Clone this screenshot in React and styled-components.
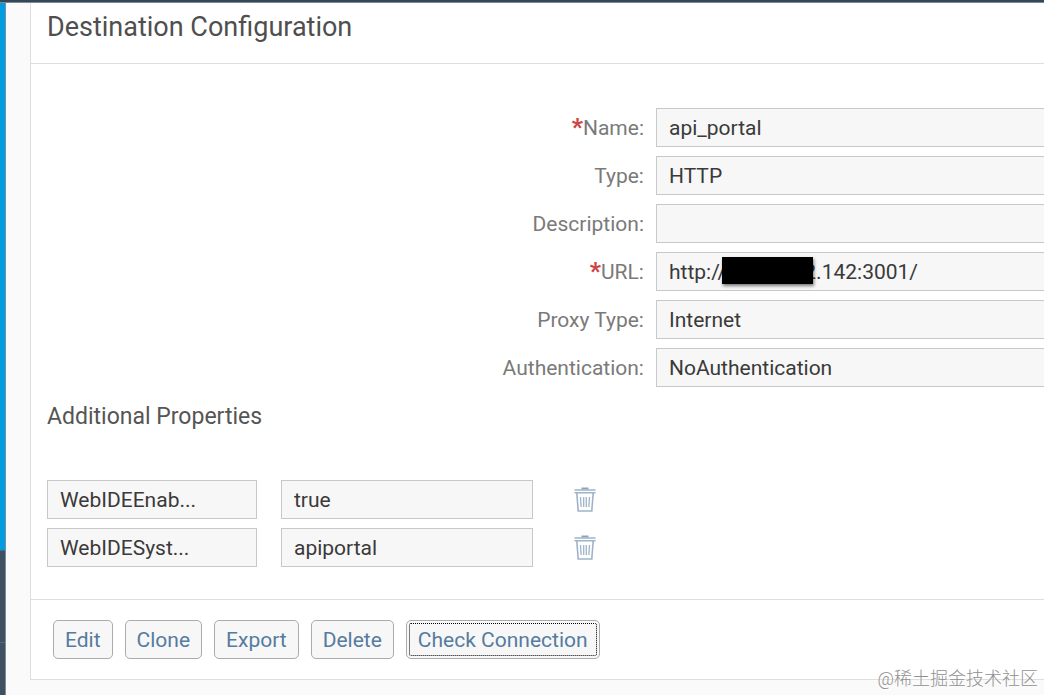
import React from 'react'
import styled, { createGlobalStyle } from 'styled-components'

const GlobalStyle = createGlobalStyle`
  * {
    box-sizing: border-box;
  }

  body {
    margin: 0;
    background-color: #fafafa;
    font-family: Roboto, "Noto Sans CJK SC", sans-serif;
    font-size: 21px;
    color: #333333;
  }
`

const Container = styled.div`
  position: relative;
  display: flex;
  flex-direction: column;
  min-height: 100vh;
  overflow: hidden;
`

const TopBar = styled.div`
  height: 3px;
  background-color: #354656;
  border-bottom: 1px solid #7b8a98;
`

const Wrapper = styled.div`
  display: flex;
  flex: 1;
`

const Sidebar = styled.div`
  display: flex;
  flex-direction: column;
  width: 6px;
  border-right: 1px solid #7790a5;
  background-color: #3f5161;
`

const SidebarActive = styled.div`
  flex: 1;
  background-color: #009de0;
`

const SidebarItem = styled.div`
  height: ${props => props.$height};
  border-top: 1px solid #4f6b84;
`

const Main = styled.main`
  flex: 1;
  min-width: 0;
  padding: 0 0 15px 24px;
`

const Panel = styled.section`
  border-left: 1px solid #dedede;
  border-bottom: 1px solid #dedede;
  background-color: #ffffff;
`

const Header = styled.header`
  padding: 8px 16px 20px;
  border-bottom: 1px solid #dedede;
`

const Title = styled.h1`
  margin: 0;
  font-size: 27px;
  font-weight: 400;
  line-height: 32px;
  color: #4f4f4f;
`

const Form = styled.div`
  display: flex;
  flex-direction: column;
  gap: 9px;
  padding: 44px 0 0 16px;
`

const FormRow = styled.div`
  display: grid;
  grid-template-columns: 20fr 13fr;
  column-gap: 12px;
  align-items: center;
`

const Label = styled.label`
  line-height: 24px;
  text-align: right;
  color: #7a7a7a;
`

const Required = styled.span`
  font-size: 24px;
  font-weight: 900;
  line-height: 20px;
  color: #cc4646;
`

const Field = styled.div`
  position: relative;
  display: flex;
`

const Input = styled.input`
  width: ${props => props.$width || '100%'};
  height: 39px;
  margin: 0;
  padding: 0 12px;
  border: 1px solid #c8c8c8;
  border-right-width: ${props => (props.$open ? '0' : '1px')};
  border-radius: 0;
  outline: none;
  background-color: #f7f7f7;
  font-family: inherit;
  font-size: 21px;
  color: #3a3a3a;
`

const Redaction = styled.span`
  position: absolute;
  top: 5px;
  left: 66px;
  width: 91px;
  height: 27px;
  background-color: #000000;
  box-shadow: 1px 2px 3px rgba(0, 0, 0, 0.5);
`

const SubTitle = styled.h2`
  margin: 0;
  padding: 16px 16px 0;
  font-size: 23px;
  font-weight: 400;
  line-height: 28px;
  color: #555555;
`

const Properties = styled.div`
  display: flex;
  flex-direction: column;
  gap: 9px;
  padding: 49px 16px 32px;
`

const PropertyRow = styled.div`
  display: flex;
  align-items: center;
  gap: 24px;
`

const IconButton = styled.button`
  display: flex;
  margin: 0 0 0 16px;
  padding: 0;
  border: none;
  background: none;
  cursor: pointer;
`

const Footer = styled.footer`
  display: flex;
  gap: 12px;
  padding: 20px 22px;
  border-top: 1px solid #dedede;
`

const Button = styled.button`
  height: 39px;
  padding: 0 11px;
  border: 1px solid #ababab;
  border-radius: 5px;
  background-color: #f7f7f7;
  font-family: inherit;
  font-size: 21px;
  color: #557c9f;
  cursor: pointer;
  outline: ${props => (props.$focused ? '1px dotted #000000' : 'none')};
  outline-offset: -4px;
`

const Watermark = styled.div`
  position: absolute;
  right: 6px;
  bottom: 3px;
  font-size: 18px;
  font-weight: 300;
  line-height: 26px;
  color: #909090;
  text-shadow: 0 0 2px #ffffff;
`

const TrashIcon = () => (
  <svg width="24" height="26" viewBox="0 0 24 26" fill="none" stroke="#9db4ca" aria-hidden="true">
    <path d="M8.500 1.500h7" stroke="#8aa5be" strokeWidth="2" />
    <path d="M1.500 3h21M1.500 5.800h21" strokeWidth="1.4" />
    <path d="M3.800 6l1.400 18h13.600L20.200 6" strokeWidth="1.6" />
    <path d="M7.500 10l.6 10M10.700 10v10M13.300 10v10M16.500 10l-.6 10" strokeWidth="1.3" />
  </svg>
)

const fields = [
  { id: 'name', label: 'Name:', value: 'api_portal', required: true },
  { id: 'type', label: 'Type:', value: 'HTTP' },
  { id: 'description', label: 'Description:', value: '' },
  { id: 'url', label: 'URL:', value: 'http://' + '\u00a0'.repeat(15) + '2.142:3001/', required: true, redacted: true },
  { id: 'proxy', label: 'Proxy Type:', value: 'Internet' },
  { id: 'auth', label: 'Authentication:', value: 'NoAuthentication' },
]

const properties = [
  { name: 'WebIDEEnab...', value: 'true' },
  { name: 'WebIDESyst...', value: 'apiportal' },
]

const App = () => {
  return (
    <Container>
      <GlobalStyle />
      <TopBar />
      <Wrapper>
        <Sidebar>
          <SidebarActive />
          <SidebarItem $height="92px" />
          <SidebarItem $height="53px" />
        </Sidebar>
        <Main>
          <Panel>
            <Header>
              <Title>Destination Configuration</Title>
            </Header>

            <Form>
              {fields.map(field => (
                <FormRow key={field.id}>
                  <Label htmlFor={field.id}>
                    {field.required && <Required>*</Required>}
                    {field.label}
                  </Label>
                  <Field>
                    <Input id={field.id} type="text" defaultValue={field.value} readOnly $open />
                    {field.redacted && <Redaction />}
                  </Field>
                </FormRow>
              ))}
            </Form>

            <SubTitle>Additional Properties</SubTitle>
            <Properties>
              {properties.map(property => (
                <PropertyRow key={property.name}>
                  <Input $width="210px" type="text" aria-label="Property" defaultValue={property.name} readOnly />
                  <Input $width="252px" type="text" aria-label={property.name} defaultValue={property.value} readOnly />
                  <IconButton type="button" aria-label="Delete property">
                    <TrashIcon />
                  </IconButton>
                </PropertyRow>
              ))}
            </Properties>

            <Footer>
              <Button>Edit</Button>
              <Button>Clone</Button>
              <Button>Export</Button>
              <Button>Delete</Button>
              <Button $focused>Check Connection</Button>
            </Footer>
          </Panel>
        </Main>
      </Wrapper>
      <Watermark>@稀土掘金技术社区</Watermark>
    </Container>
  )
}

export default App
